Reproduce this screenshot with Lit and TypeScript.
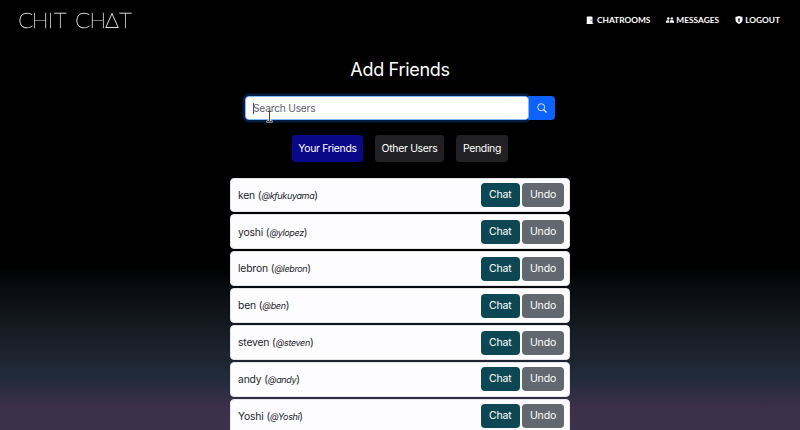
import { LitElement, html, css, svg } from "lit";
import { customElement } from "lit/decorators.js";

const friends = [
  ["ken", "kfukuyama"],
  ["yoshi", "ylopez"],
  ["lebron", "lebron"],
  ["ben", "ben"],
  ["steven", "steven"],
  ["andy", "andy"],
  ["Yoshi", "Yoshi"],
];

const door = svg`<path fill-rule="evenodd" d="M1.5 15V2a1 1 0 0 1 1-1h8.500l2 1.200V15h2v1H1v-1zM9.200 7v2.400h1.600v-2.400z"/>`;
const people = svg`<circle cx="4.500" cy="5" r="2.500"/><circle cx="11.500" cy="5" r="2.500"/><path d="M0 13.5V11c0-1.500 2-2.400 4.500-2.400q1.500 0 2.300.4Q6 10 6 11.200v2.300zM7.300 13.500V11c0-1.500 1.800-2.400 4.300-2.400S16 9.500 16 11v2.500z"/>`;
const shield = svg`<path fill-rule="evenodd" d="M8 0 15 2.200V8c0 4-3.600 6.600-7 8-3.400-1.400-7-4-7-8V2.200zM8 4.300a1.900 1.900 0 0 0-1.100 3.400L6.500 11.300h3l-.4-3.600A1.900 1.900 0 0 0 8 4.300z"/>`;

@customElement("app-root")
export class AppRoot extends LitElement {
  static styles = css`
    :host {
      display: block;
      height: 430px;
      overflow: hidden;
      position: relative;
      font-family: Inter, "Liberation Sans", sans-serif;
      color: #fff;
      background: linear-gradient(#000 0 266px, #090c11 290px, #161a22 328px, #202a38 374px, #302d42 394px, #3c304b 410px, #3c304d 430px);
    }
    * { box-sizing: border-box; }
    header { height: 41px; display: flex; justify-content: space-between; }
    .logo { width: 140px; height: 41px; font: 100 22px Lato, sans-serif; fill: #eee; stroke: #ddd; stroke-width: 0.400px; will-change: transform; }
    .logo .tri { fill: none; stroke-width: 1px; }
    nav { display: flex; gap: 15.500px; padding: 0 20px 1px 0; align-items: center; }
    nav a { display: flex; align-items: center; gap: 2.500px; font: 700 8.350px/12px Lato, sans-serif; white-space: nowrap; }
    nav svg { width: 8px; height: 8px; fill: #fff; }
    main { display: flex; flex-direction: column; align-items: center; }
    h1 { margin: 17px 0 0; font-size: 18px; font-weight: 400; line-height: 24px; letter-spacing: -0.300px; }
    .search { display: flex; width: 310px; height: 24px; margin-top: 14px; }
    .field { flex: 1; position: relative; z-index: 1; border-radius: 4px; background: #fff; border: 1px solid #86b7fe; box-shadow: 0 0 0 2.500px rgba(13, 110, 253, 0.25); padding-left: 7px; font-size: 10.200px; letter-spacing: -0.200px; line-height: 23px; color: #5d6268; }
    .caret { position: absolute; left: 7px; top: 6px; width: 1px; height: 11px; background: #555; }
    .pointer { position: absolute; left: 19.500px; top: 14px; width: 7px; height: 12px; fill: none; stroke: #fff; stroke-width: 2; }
    .pointer .ink { stroke: #444; stroke-width: 1; }
    .go { width: 27px; margin-left: -1px; background: #0d62fd; border-radius: 0 4px 4px 0; display: grid; place-items: center; }
    .go svg { width: 10px; height: 10px; fill: none; stroke: #fff; stroke-width: 0.800; }
    .tabs { display: flex; gap: 12px; margin-top: 15px; }
    .tab { height: 27px; border-radius: 3.500px; background: #212124; font-size: 10.400px; letter-spacing: -0.300px; line-height: 27px; text-align: center; white-space: nowrap; }
    .yours { width: 71px; background: #0b0789; }
    .other { width: 69px; }
    .pending { width: 52px; }
    .list { width: 340px; margin-top: 15.600px; display: flex; flex-direction: column; gap: 2px; }
    .row { height: 34.900px; flex: none; border-radius: 4px; background: #fdfcff; color: #24262b; border: 1px solid #e4e4e8; display: flex; align-items: center; padding: 0 5px 0 7px; font-size: 10.300px; letter-spacing: -0.150px; }
    .name { flex: 1; white-space: pre; padding-bottom: 0.800px; }
    .name b { font-weight: 400; }
    .name i { font-size: 9px; letter-spacing: -0.350px; }
    .btn { height: 24px; line-height: 24px; border-radius: 4px; color: #fff; text-align: center; font-size: 10.500px; }
    .chat { width: 38.500px; background: #0e4754; margin-right: 2.500px; }
    .undo { width: 42px; background: #626870; }
  `;

  render() {
    return html`
      <header>
        <svg class="logo"><text y="28" x="18.300 32 47.800 54 68 75.200 89.500">CHIT CH</text><path class="tri" d="M112 13.500 105.800 27.500H118.200z" /><text x="119.300" y="28">T</text></svg>
        <nav>
          <a><svg viewBox="0 0 16 16">${door}</svg>CHATROOMS</a>
          <a><svg viewBox="0 0 16 16">${people}</svg>MESSAGES</a>
          <a><svg viewBox="0 0 16 16">${shield}</svg>LOGOUT</a>
        </nav>
      </header>
      <main>
        <h1>Add Friends</h1>
        <div class="search">
          <div class="field">Search Users<span class="caret"></span>
            <svg class="pointer" viewBox="0 0 7 12"><path d="M1 .5h5M3.500 0v11M.5 10.500h6" /><path class="ink" d="M1.500 .5h4M3.500 0v11M1 10.500h5" /></svg>
          </div>
          <div class="go"><svg viewBox="0 0 10 10"><circle cx="4.200" cy="4.200" r="3.500" /><path d="m6.700 6.700 2.800 2.800" stroke-width="1.200" /></svg></div>
        </div>
        <div class="tabs">
          <div class="tab yours">Your Friends</div>
          <div class="tab other">Other Users</div>
          <div class="tab pending">Pending</div>
        </div>
        <div class="list">
          ${friends.map(([name, user]) => html`<div class="row"><span class="name">${name} <b>(</b><i>@${user}</i><b>)</b></span><span class="btn chat">Chat</span><span class="btn undo">Undo</span></div>`)}
        </div>
      </main>
    `;
  }
}
